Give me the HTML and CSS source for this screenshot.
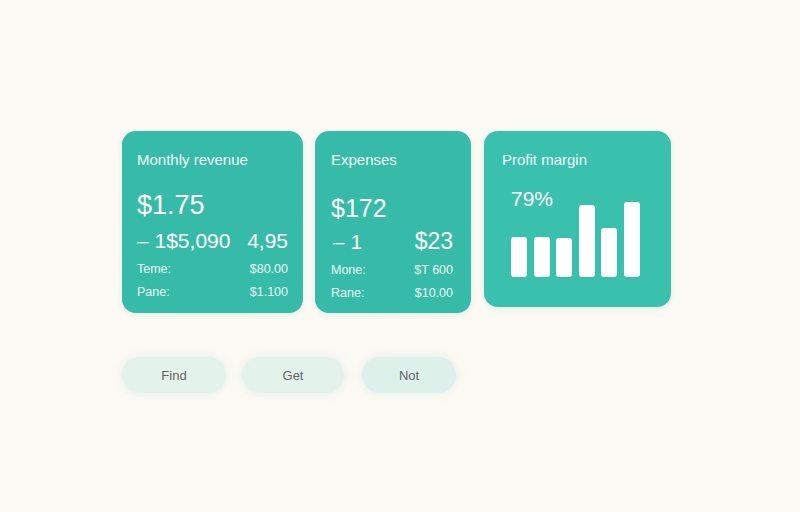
FILE: index.html
```html
<!DOCTYPE html>
<html lang="en">
<head>
    <meta charset="UTF-8">
    <meta name="viewport" content="width=device-width, initial-scale=1.0">
    <title>Finance Overview</title>
    <link rel="stylesheet" href="styles.css">
</head>
<body>

    <main class="dashboard">
        <!-- Summary cards -->
        <div class="cards">
            <div class="card card-revenue">
                <h2 class="card-title">Monthly revenue</h2>
                <p class="card-value">$1.75</p>
                <div class="card-row big">
                    <span>&ndash; 1$5,090</span>
                    <span>4,95</span>
                </div>
                <div class="card-row small">
                    <span>Teme:</span>
                    <span>$80.00</span>
                </div>
                <div class="card-row small">
                    <span>Pane:</span>
                    <span>$1.100</span>
                </div>
            </div>

            <div class="card card-expenses">
                <h2 class="card-title">Expenses</h2>
                <p class="card-value">$172</p>
                <div class="card-row big">
                    <span>&ndash; 1</span>
                    <span class="strong">$23</span>
                </div>
                <div class="card-row small">
                    <span>Mone:</span>
                    <span>$T 600</span>
                </div>
                <div class="card-row small">
                    <span>Rane:</span>
                    <span>$10.00</span>
                </div>
            </div>

            <div class="card card-profit">
                <h2 class="card-title">Profit margin</h2>
                <div class="chart">
                    <span class="chart-value">79%</span>
                    <div class="bars">
                        <div class="bar" style="height: 40px"></div>
                        <div class="bar" style="height: 40px"></div>
                        <div class="bar" style="height: 39px"></div>
                        <div class="bar" style="height: 72px"></div>
                        <div class="bar" style="height: 49px"></div>
                        <div class="bar" style="height: 75px"></div>
                    </div>
                </div>
            </div>
        </div>

        <!-- Actions -->
        <div class="actions">
            <button class="pill pill-find">Find</button>
            <button class="pill pill-get">Get</button>
            <button class="pill pill-not">Not</button>
        </div>
    </main>

</body>
</html>
```

FILE: styles.css
```css
* {
    margin: 0;
    padding: 0;
    box-sizing: border-box;
    font-family: 'Liberation Sans', Arial, sans-serif;
}

body {
    background: #fcfaf5;
    min-height: 100vh;
}

.dashboard {
    display: flex;
    flex-direction: column;
    padding: 131px 0 0 122px;
}

.cards {
    display: flex;
    align-items: flex-start;
    gap: 12px;
}

.card {
    background: #37bba9;
    border-radius: 14px;
    color: #ffffff;
    height: 182px;
    display: flex;
    flex-direction: column;
    box-shadow: 0 2px 6px rgba(40, 140, 125, 0.12);
}

.card-revenue {
    width: 181px;
    padding: 20px 15px 0 15px;
}

.card-expenses {
    width: 156px;
    padding: 20px 18px 0 16px;
}

.card-profit {
    width: 187px;
    height: 176px;
    margin-left: 1px;
    padding: 20px 18px 0 18px;
    background: #3ac1ae;
}

.card-title {
    font-size: 15px;
    font-weight: normal;
    line-height: 18px;
    color: #f2fbf9;
}

.card-value {
    font-size: 27px;
    line-height: 30px;
    margin-top: 21px;
}

.card-expenses .card-value {
    font-size: 25px;
    margin-top: 24px;
}

.card-row {
    display: flex;
    justify-content: space-between;
    align-items: baseline;
}

.card-row.big {
    font-size: 21px;
    line-height: 24px;
    margin-top: 9px;
}

.card-expenses .card-row.big {
    margin-top: 6px;
    padding-left: 2px;
}

.card-row .strong {
    font-size: 23px;
}

.card-row.small {
    font-size: 12.5px;
    line-height: 14px;
    margin-top: 9px;
    color: #eaf8f5;
}

.card-row.small + .card-row.small {
    margin-top: 9px;
}

/* Profit chart */
.chart {
    display: grid;
    margin: 20px 0 0 9px;
    height: 88px;
}

.chart-value,
.bars {
    grid-area: 1 / 1;
}

.chart-value {
    font-size: 21px;
    line-height: 20px;
    align-self: start;
}

.bars {
    display: flex;
    align-items: flex-end;
    gap: 6.5px;
    align-self: end;
}

.bar {
    width: 16px;
    background: #ffffff;
    border-radius: 3px;
}

/* Action pills */
.actions {
    display: flex;
    gap: 16px;
    margin-top: 44px;
}

.pill {
    height: 36px;
    border: none;
    border-radius: 18px;
    background: #e4f2ec;
    color: #5f6664;
    font-size: 13px;
    box-shadow: 0 0 8px rgba(200, 230, 220, 0.5);
}

.pill-find {
    width: 104px;
}

.pill-get {
    width: 102px;
}

.pill-not {
    width: 94px;
    margin-left: 2px;
    background: #ddf0ea;
}
```
